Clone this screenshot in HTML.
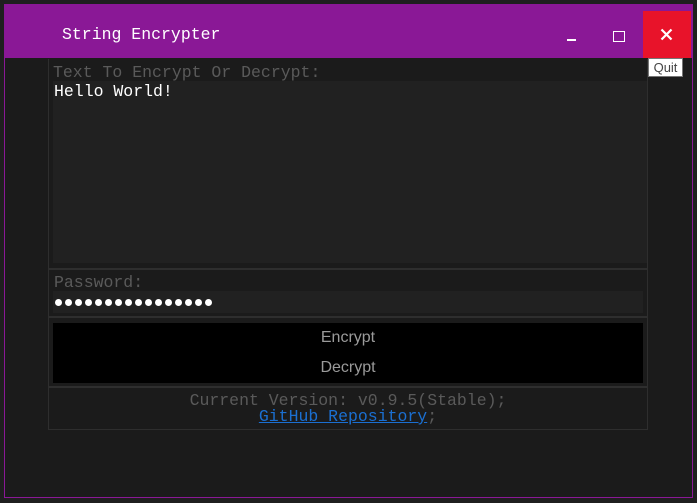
<!DOCTYPE html>
<html><head><meta charset="utf-8"><style>
*{margin:0;padding:0;box-sizing:border-box}
body{width:697px;height:503px;background:#1f1f1f;position:relative;overflow:hidden;font-family:"Liberation Mono",monospace}
.a{position:absolute}
.mono{font-family:"Liberation Mono",monospace;font-size:16.5px;white-space:pre}
.d{display:inline-block;width:7px;height:7px;border-radius:50%;background:#fff;margin-right:3px}
</style></head><body>
<div class="a" style="left:4px;top:4px;width:689px;height:494px;border:1px solid #8a1896;background:#1b1b1b"></div>
<div class="a" style="left:4px;top:4px;width:689px;height:54px;background:#8a1896"></div>
<div class="a mono" style="left:62px;top:25px;color:#fff;line-height:20px">String Encrypter</div>
<div class="a" style="left:567px;top:39px;width:9px;height:2px;background:#fff"></div>
<div class="a" style="left:613px;top:31px;width:12px;height:11px;border:1.5px solid #fff"></div>
<div class="a" style="left:643px;top:11px;width:48px;height:47px;background:#e8132a"></div>
<svg class="a" style="left:660px;top:28px" width="13" height="13"><path d="M1.5 1.5L11.5 11.5M11.5 1.5L1.5 11.5" stroke="#fff" stroke-width="2.2"/></svg>
<div class="a" style="left:648px;top:58px;width:35px;height:19px;background:#fff;border:1px solid #767676;font-family:'Liberation Sans',sans-serif;font-size:13px;color:#444;text-align:center;line-height:17px">Quit</div>
<div class="a" style="left:48px;top:59px;width:600px;height:371px;border:1px solid #2e2e2e;border-top:none"></div>
<div class="a" style="left:48px;top:268px;width:600px;height:2px;background:#2e2e2e"></div>
<div class="a" style="left:48px;top:316px;width:600px;height:2px;background:#2e2e2e"></div>
<div class="a" style="left:48px;top:386px;width:600px;height:2px;background:#2e2e2e"></div>
<div class="a mono" style="left:53px;top:63px;color:#5a5a5a;line-height:20px">Text To Encrypt Or Decrypt:</div>
<div class="a" style="left:53px;top:81px;width:594px;height:182px;background:#212121"></div>
<div class="a mono" style="left:54px;top:82px;color:#fff;line-height:20px">Hello World!</div>
<div class="a mono" style="left:54px;top:273px;color:#5a5a5a;line-height:20px">Password:</div>
<div class="a" style="left:53px;top:291px;width:590px;height:22px;background:#212121"></div>
<div class="a" style="left:55px;top:299px;height:8px;line-height:0;white-space:nowrap"><span class="d"></span><span class="d"></span><span class="d"></span><span class="d"></span><span class="d"></span><span class="d"></span><span class="d"></span><span class="d"></span><span class="d"></span><span class="d"></span><span class="d"></span><span class="d"></span><span class="d"></span><span class="d"></span><span class="d"></span><span class="d"></span></div>
<div class="a" style="left:53px;top:323px;width:590px;height:60px;background:#000"></div>
<div class="a" style="left:53px;top:328px;width:590px;text-align:center;font-family:'Liberation Sans',sans-serif;font-size:16px;color:#9a9a9a;line-height:20px">Encrypt</div>
<div class="a" style="left:53px;top:358px;width:590px;text-align:center;font-family:'Liberation Sans',sans-serif;font-size:16px;color:#9a9a9a;line-height:20px">Decrypt</div>
<div class="a mono" style="left:48px;top:392px;width:600px;text-align:center;color:#5a5a5a;line-height:17px">Current Version: v0.9.5(Stable);</div>
<div class="a mono" style="left:48px;top:408px;width:600px;text-align:center;color:#5a5a5a;line-height:17px"><span style="color:#1b6fd1;text-decoration:underline">GitHub Repository</span>;</div>
</body></html>
